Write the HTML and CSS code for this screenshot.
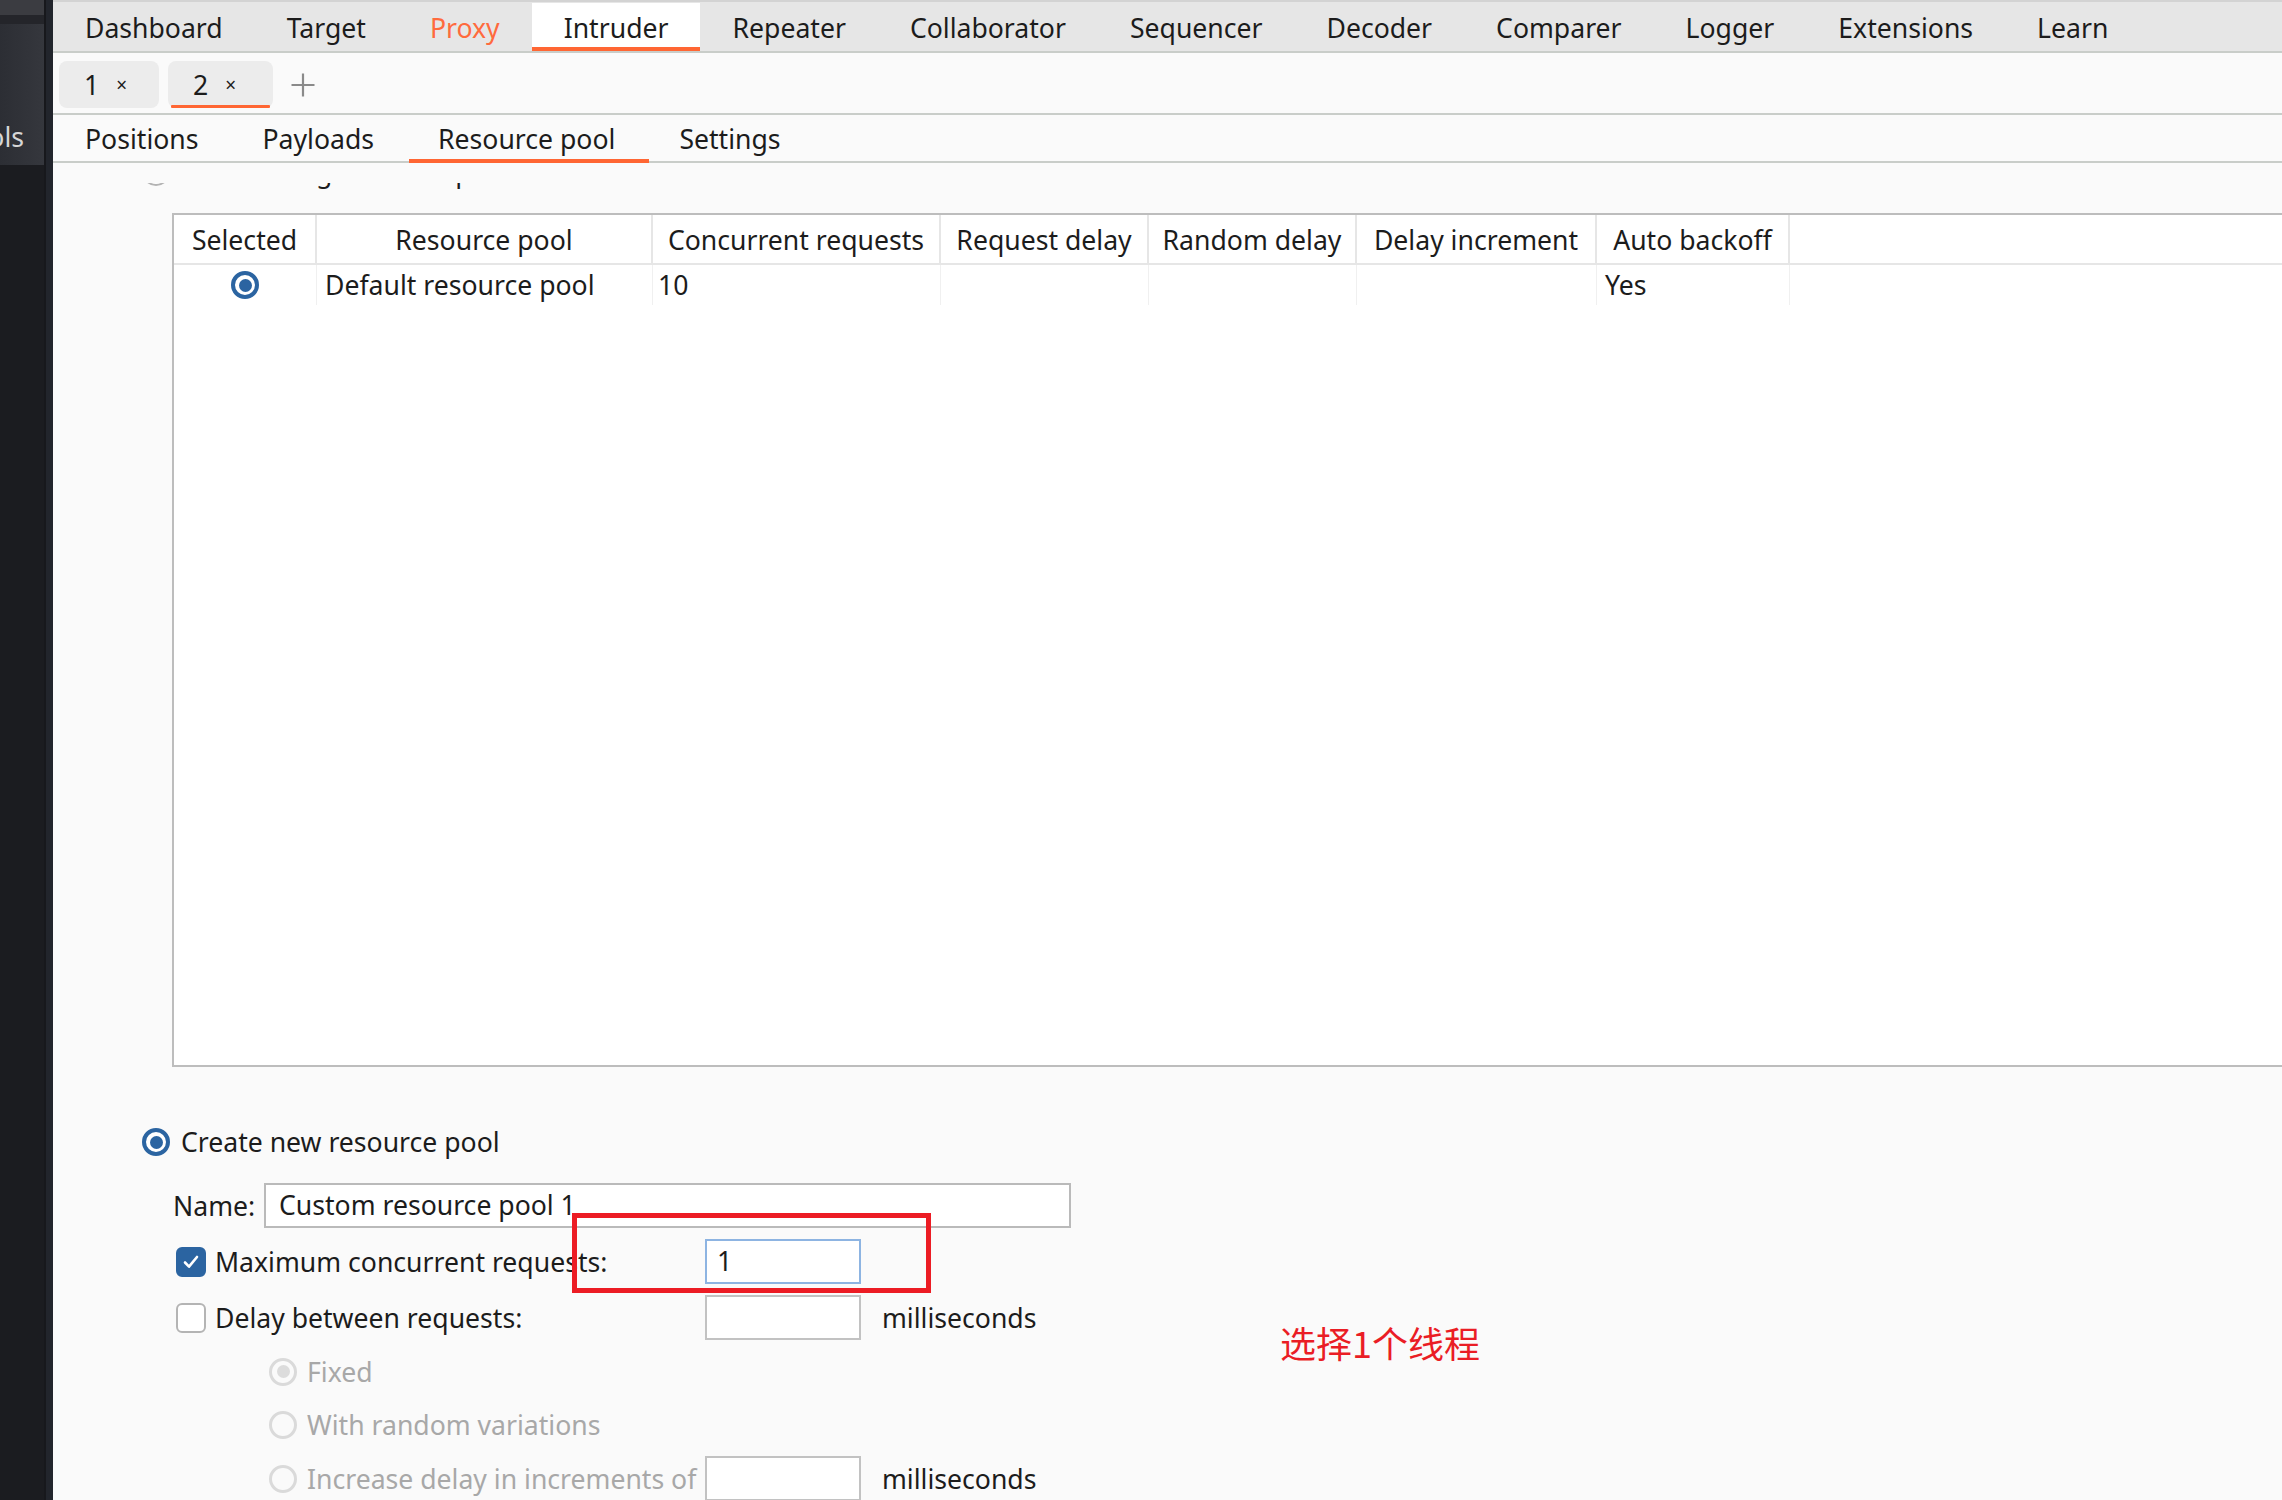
FILE: index.html
```html
<!DOCTYPE html>
<html lang="en">
<head>
<meta charset="utf-8">
<title>Burp Intruder - Resource pool</title>
<link rel="stylesheet" href="styles.css">
</head>
<body>
<div class="app">
  <aside class="sidebar">
    <div class="sb-col">
      <div class="sb-top"></div>
      <div class="sb-sep"></div>
      <div class="sb-panel"><span class="sb-label">Tools</span></div>
      <div class="sb-rest"></div>
    </div>
    <div class="sb-strip"></div>
  </aside>

  <main class="main">
    <nav class="topnav">
      <div class="tab">Dashboard</div>
      <div class="tab">Target</div>
      <div class="tab tab-proxy">Proxy</div>
      <div class="tab tab-active">Intruder</div>
      <div class="tab">Repeater</div>
      <div class="tab">Collaborator</div>
      <div class="tab">Sequencer</div>
      <div class="tab">Decoder</div>
      <div class="tab">Comparer</div>
      <div class="tab">Logger</div>
      <div class="tab">Extensions</div>
      <div class="tab">Learn</div>
    </nav>

    <div class="sessions">
      <div class="stab"><span class="snum">1</span><span class="sclose">×</span></div>
      <div class="stab stab-active"><span class="snum">2</span><span class="sclose">×</span></div>
      <svg class="plus" width="26" height="26" viewBox="0 0 26 26"><path d="M13 1.5v23M1.5 13h23" stroke="#8a8a8a" stroke-width="2.2" fill="none"/></svg>
    </div>

    <div class="subtabs">
      <div class="subtab">Positions</div>
      <div class="subtab">Payloads</div>
      <div class="subtab subtab-active">Resource pool</div>
      <div class="subtab">Settings</div>
    </div>

    <section class="content">
      <div class="viewport">
        <div class="option option-hidden"><span class="radio"></span><span>Use existing resource pool</span></div>

        <div class="table">
          <div class="th">Selected</div>
          <div class="th">Resource pool</div>
          <div class="th">Concurrent requests</div>
          <div class="th">Request delay</div>
          <div class="th">Random delay</div>
          <div class="th">Delay increment</div>
          <div class="th">Auto backoff</div>
          <div class="th th-fill"></div>

          <div class="td td-center"><span class="radio radio-on"></span></div>
          <div class="td">Default resource pool</div>
          <div class="td td-num">10</div>
          <div class="td"></div>
          <div class="td"></div>
          <div class="td"></div>
          <div class="td">Yes</div>
          <div class="td td-fill"></div>
        </div>

        <div class="option option-create"><span class="radio radio-on"></span><span>Create new resource pool</span></div>

        <div class="form">
          <div class="frow">
            <span class="name-label">Name:</span>
            <div class="input input-name">Custom resource pool 1</div>
          </div>
          <div class="frow frow-g11">
            <div class="flabel">
              <span class="check check-on"><svg width="18" height="16" viewBox="0 0 18 16"><path d="M3 8.5l4 4.2L15 3" stroke="#fff" stroke-width="2.6" fill="none" stroke-linecap="round" stroke-linejoin="round"/></svg></span>
              <span>Maximum concurrent requests:</span>
            </div>
            <div class="input input-small input-focus">1</div>
          </div>
          <div class="frow frow-g11">
            <div class="flabel">
              <span class="check"></span>
              <span>Delay between requests:</span>
            </div>
            <div class="input input-small"></div>
            <span class="unit">milliseconds</span>
          </div>
          <div class="frow frow-g9">
            <div class="flabel flabel-sub disabled">
              <span class="radio radio-dis radio-dis-on"></span>
              <span>Fixed</span>
            </div>
          </div>
          <div class="frow frow-g8">
            <div class="flabel flabel-sub disabled">
              <span class="radio radio-dis"></span>
              <span>With random variations</span>
            </div>
          </div>
          <div class="frow frow-g9">
            <div class="flabel flabel-sub disabled">
              <span class="radio radio-dis"></span>
              <span>Increase delay in increments of</span>
            </div>
            <div class="input input-small"></div>
            <span class="unit">milliseconds</span>
          </div>
        </div>
      </div>
    </section>
  </main>

  <div class="annot-box"></div>
  <div class="annot-text">选择1个线程</div>
</div>
</body>
</html>
```

FILE: styles.css
```css
* { box-sizing: border-box; }

html, body {
  margin: 0;
  padding: 0;
}

body {
  width: 2282px;
  height: 1500px;
  overflow: hidden;
  background: #fafafa;
  font-family: "Noto Sans", "Open Sans", sans-serif;
  font-size: 26.6px;
  color: #1c1c1c;
}

.app {
  position: relative;
  display: flex;
  width: 2282px;
  height: 1500px;
  overflow: hidden;
}

/* ---------- left sidebar ---------- */
.sidebar {
  display: flex;
  width: 53px;
  flex: none;
  height: 100%;
}

.sb-col {
  width: 44px;
  display: flex;
  flex-direction: column;
  background: #1b1c20;
}

.sb-top {
  height: 15px;
  background: #3b3c41;
}

.sb-sep {
  height: 9px;
  background: #24252a;
}

.sb-panel {
  height: 141px;
  background: linear-gradient(90deg, #2c2e34, #35373d);
  display: flex;
  justify-content: flex-end;
  align-items: flex-end;
  overflow: hidden;
  padding: 0 20px 13px 0;
}

.sb-label {
  color: #d6d6d6;
  line-height: 30px;
  white-space: nowrap;
}

.sb-rest {
  flex: 1;
  background: #1b1c20;
}

.sb-strip {
  width: 9px;
  background: #22252c;
  border-left: 2px solid #17181c;
}

/* ---------- main column ---------- */
.main {
  flex: 1;
  display: flex;
  flex-direction: column;
  min-width: 0;
}

.topnav {
  height: 53px;
  flex: none;
  display: flex;
  background: #e6e6e6;
  border-top: 2px solid #d3d3d3;
  border-bottom: 2px solid #c9cdc9;
}

.tab {
  height: 49px;
  line-height: 52px;
  padding: 0 32px;
  white-space: nowrap;
  color: #1c1c1c;
}

.tab-proxy {
  color: #ff6a3d;
}

.tab-active {
  background: #ffffff;
  box-shadow: inset 0 -4px 0 #ff6633;
  margin-top: 1px;
  height: 48px;
  line-height: 51px;
}

/* session tabs */
.sessions {
  height: 62px;
  flex: none;
  display: flex;
  align-items: flex-start;
  gap: 9px;
  padding: 8px 0 0 6px;
  border-bottom: 2px solid #c9cdc9;
}

.stab {
  position: relative;
  height: 47px;
  display: flex;
  align-items: center;
  gap: 17px;
  padding: 0 32px 0 25px;
  background: #ececec;
  border-radius: 8px;
}

.stab-active {
  padding-right: 37px;
}

.snum {
  line-height: 30px;
}

.sclose {
  font-size: 19px;
  line-height: 20px;
  color: #1c1c1c;
}

.stab-active::after {
  content: "";
  position: absolute;
  left: 3px;
  right: 3px;
  bottom: 0;
  height: 3px;
  background: #ff6633;
  border-radius: 1px;
}

.plus {
  margin: 11px 0 0 8px;
}

/* sub tabs */
.subtabs {
  height: 48px;
  flex: none;
  display: flex;
  border-bottom: 2px solid #c9cdc9;
}

.subtab {
  position: relative;
  height: 46px;
  line-height: 49px;
  padding: 0 32px;
  white-space: nowrap;
}

.subtab-active::after {
  content: "";
  position: absolute;
  left: 3px;
  right: -2px;
  bottom: -2px;
  height: 4px;
  background: #ff6633;
}

/* ---------- content ---------- */
.content {
  flex: 1;
  padding-top: 20px;
  min-height: 0;
}

.viewport {
  height: 100%;
  overflow: hidden;
}

.option {
  display: flex;
  align-items: center;
  gap: 11px;
  height: 36px;
  line-height: 36px;
  margin-left: 89px;
  white-space: nowrap;
}

.option-hidden {
  margin-top: -29px;
}

.option-create {
  margin-top: 57px;
}

.radio {
  width: 28px;
  height: 28px;
  flex: none;
  border-radius: 50%;
  border: 2px solid #b3b3b3;
  background: #ffffff;
  display: grid;
  place-items: center;
}

.radio-on {
  border: 4px solid #2b64a1;
}

.radio-on::after {
  content: "";
  width: 13px;
  height: 13px;
  border-radius: 50%;
  background: #2b64a1;
}

.radio-dis {
  border: 3px solid #dadada;
  background: #fafafa;
}

.radio-dis-on::after {
  content: "";
  width: 13px;
  height: 13px;
  border-radius: 50%;
  background: #dcdcdc;
}

/* table */
.table {
  margin-top: 23px;
  margin-left: 119px;
  width: 2200px;
  height: 854px;
  background: #ffffff;
  border: 2px solid #bdbdbd;
  display: grid;
  grid-template-columns: 143px 336px 288px 208px 208px 240px 193px 1fr;
  grid-template-rows: 50px 40px;
  align-content: start;
}

.th {
  height: 50px;
  line-height: 50px;
  text-align: center;
  white-space: nowrap;
  border-right: 2px solid #e6e6e6;
  border-bottom: 2px solid #e6e6e6;
}

.th-fill {
  border-right: none;
}

.td {
  height: 40px;
  line-height: 40px;
  padding-left: 8px;
  white-space: nowrap;
  border-right: 1px solid #f0f0f0;
}

.td-num {
  padding-left: 5px;
}

.td-center {
  padding-left: 0;
  display: flex;
  justify-content: center;
  align-items: center;
}

.td-fill {
  border-right: none;
}

/* form */
.form {
  margin-top: 23px;
  margin-left: 120px;
  display: flex;
  flex-direction: column;
}

.frow {
  display: flex;
  align-items: center;
  height: 45px;
  white-space: nowrap;
}

.frow-g11 { margin-top: 11px; }
.frow-g9 { margin-top: 9px; }
.frow-g8 { margin-top: 8px; }

.name-label {
  width: 91px;
}

.input {
  height: 45px;
  line-height: 41px;
  background: #ffffff;
  border: 2px solid #c2c2c2;
  padding-left: 13px;
  white-space: nowrap;
}

.input-name {
  width: 807px;
  border-color: #bababa;
}

.input-small {
  width: 156px;
  padding-left: 10px;
}

.input-focus {
  border-color: #8db4e2;
}

.flabel {
  width: 532px;
  display: flex;
  align-items: center;
  gap: 9px;
  padding-left: 3px;
}

.flabel-sub {
  padding-left: 96px;
  gap: 10px;
}

.disabled {
  color: #a8a8a8;
}

.check {
  width: 30px;
  height: 30px;
  flex: none;
  border-radius: 6px;
  border: 2px solid #b4b4b4;
  background: #ffffff;
  display: grid;
  place-items: center;
}

.check-on {
  background: #2b64a1;
  border-color: #2b64a1;
}

.unit {
  margin-left: 21px;
}

/* ---------- annotation overlays ---------- */
.annot-box {
  position: absolute;
  left: 572px;
  top: 1213px;
  width: 359px;
  height: 80px;
  border: 5px solid #ec1c24;
}

.annot-text {
  position: absolute;
  left: 1280px;
  top: 1324px;
  font-family: "Noto Sans CJK SC", "Noto Sans", sans-serif;
  font-size: 36px;
  line-height: 36px;
  color: #ea1d25;
  white-space: nowrap;
}
```
